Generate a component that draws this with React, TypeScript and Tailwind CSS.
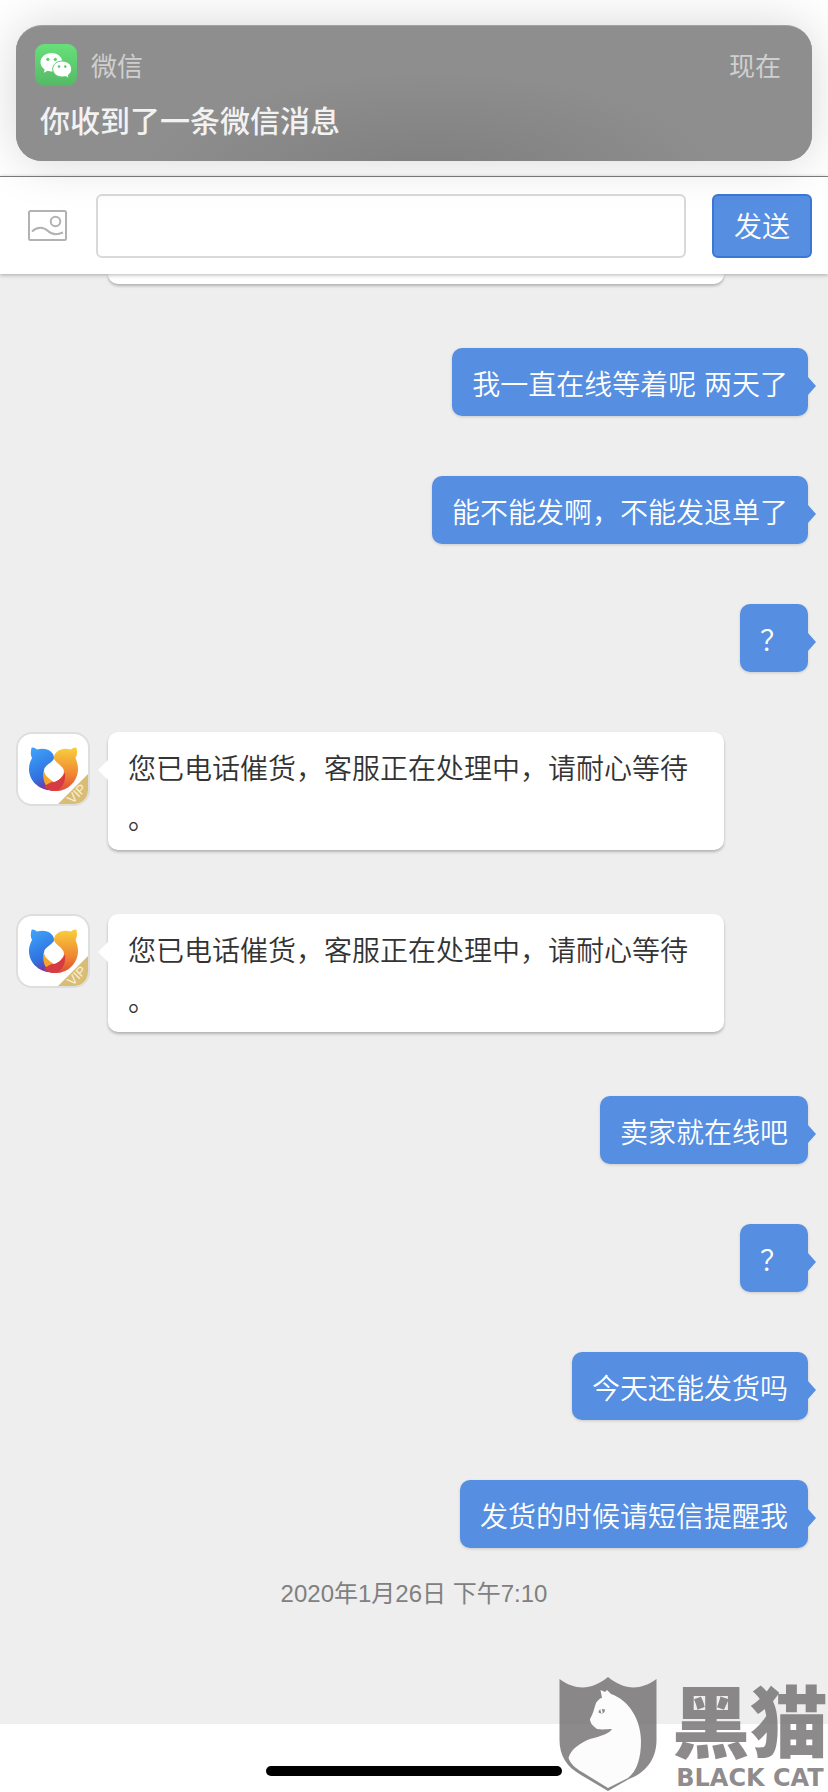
import clsx from "clsx"

type Message = {
  id: number
  from: "me" | "agent"
  text: string
}

const MESSAGES: Message[] = [
  { id: 1, from: "me", text: "我一直在线等着呢 两天了" },
  { id: 2, from: "me", text: "能不能发啊，不能发退单了" },
  { id: 3, from: "me", text: "？" },
  { id: 4, from: "agent", text: "您已电话催货，客服正在处理中，请耐心等待。" },
  { id: 5, from: "agent", text: "您已电话催货，客服正在处理中，请耐心等待。" },
  { id: 6, from: "me", text: "卖家就在线吧" },
  { id: 7, from: "me", text: "？" },
  { id: 8, from: "me", text: "今天还能发货吗" },
  { id: 9, from: "me", text: "发货的时候请短信提醒我" },
]

function WechatIcon() {
  return (
    <svg viewBox="0 0 42 42" className="size-[42px] shrink-0" aria-hidden="true">
      <defs>
        <linearGradient id="wechat" x1="0" y1="0" x2="0" y2="1">
          <stop offset="0" stopColor="#67e07a" />
          <stop offset="1" stopColor="#55b966" />
        </linearGradient>
      </defs>
      <rect width="42" height="42" rx="9.5" fill="url(#wechat)" />
      <path
        d="M16.5 9C10.400 9 5.500 13.100 5.500 18.300c0 3 1.600 5.500 4.100 7.200L8.900 28.700l3.700-1.900c1.300.4 2.600.6 3.900.6 6.100 0 11-4.100 11-9.100S22.600 9 16.500 9z"
        fill="#fff"
      />
      <path
        d="M27.200 17c-5.300 0-9.500 3.600-9.500 8s4.200 8 9.500 8c1.200 0 2.300-.2 3.400-.5l3.200 1.700-.7-2.900c2.200-1.500 3.600-3.700 3.600-6.300 0-4.400-4.200-8-9.500-8z"
        fill="#fff"
        stroke="#5ecb70"
        strokeWidth="1"
      />
      <g fill="#5ecb70">
        <circle cx="12.800" cy="15.300" r="1.600" />
        <circle cx="20.300" cy="15.300" r="1.600" />
        <circle cx="24" cy="22.600" r="1.300" />
        <circle cx="30.300" cy="22.600" r="1.300" />
      </g>
    </svg>
  )
}

function PictureIcon() {
  return (
    <svg viewBox="0 0 40 32" className="h-8 w-10" fill="none" stroke="#b2b2b2" strokeWidth="2" aria-hidden="true">
      <rect x="1" y="1" width="37" height="29" rx="1.500" />
      <circle cx="27.500" cy="11.500" r="4.800" />
      <path d="M4 21.500c5-5 11.500-5 16-.5 4 4 8.500 4.200 15 1.500" />
    </svg>
  )
}

function Avatar() {
  return (
    <div className="relative size-[74px] shrink-0 overflow-hidden rounded-2xl border-2 border-[#dedede] bg-white">
      <svg viewBox="0 0 70 70" className="size-full" role="img" aria-label="客服">
        <defs>
          <linearGradient id="bearBlue" x1="0" y1="0" x2="0.300" y2="1">
            <stop offset="0" stopColor="#3fa6fd" />
            <stop offset="0.750" stopColor="#2f72de" />
            <stop offset="1" stopColor="#6a3fb0" />
          </linearGradient>
          <linearGradient id="bearGold" x1="0" y1="0" x2="0" y2="1">
            <stop offset="0" stopColor="#f9cf3c" />
            <stop offset="0.650" stopColor="#ef8230" />
            <stop offset="1" stopColor="#dd4a3a" />
          </linearGradient>
        </defs>
        <path
          d="M13.500 14c1.500-1 3.500 0 5.500 1.500 4-1 7-1 10 0 4 1.500 7 4 7 8.500 0 4-10 7-10 12.500 0 7 4 13 8 20C20 56 11 46 11 35c0-4 1-7.500 3-11-1.500-3-1.500-6-.5-10z"
          fill="url(#bearBlue)"
        />
        <path
          d="M58.500 14c-1.500-1-3.500 0-5.500 1.500-4-1-7-1-10 0-4 1.500-7 4-7 8.500 0 4 10 8 10 13.500 0 5-7 9-14 19C48 60 60 48 60 35c0-4-1-7.500-2.500-11 1.500-3 2-6 1-10z"
          fill="url(#bearGold)"
        />
        <path d="M25.500 36c-1 6 0 12 3 16l9-3c-6-4-11-7-12-13z" fill="#f5a52c" />
        <path d="M26 53c3-3 6-5 10-5 6-2 9-5 11-10 1 9-2 15-7 18-5 1.500-10 .5-14-3z" fill="#d63b45" />
        <path d="M40 70 70 40v30z" fill="#d9bd74" />
        <text
          x="59"
          y="64"
          textAnchor="middle"
          transform="rotate(-45 59 60)"
          className="fill-[#f8f0da] font-['Liberation_Sans'] text-[13px]"
        >
          VIP
        </text>
      </svg>
    </div>
  )
}

function Bubble({ from, text }: Omit<Message, "id">) {
  const mine = from === "me"

  return (
    <div
      className={clsx(
        "relative rounded-[10px] px-5 pt-[13px] pb-[5px] leading-[50px] font-[350] [line-break:anywhere]",
        mine
          ? "bg-[#568ee1] text-white shadow-[0_1px_3px_rgba(0,0,0,0.15)]"
          : "flex-1 bg-white text-[#333] shadow-[0_2px_3px_rgba(0,0,0,0.25)]",
      )}
    >
      {text}
      <span
        className={clsx(
          "absolute border-y-transparent",
          mine
            ? "top-[29px] left-full border-y-[9px] border-l-8 border-l-[#568ee1]"
            : "top-7 right-full border-y-10 border-r-10 border-r-white",
        )}
      />
    </div>
  )
}

function MessageRow({ from, text }: Omit<Message, "id">) {
  if (from === "me") {
    return (
      <li className="flex justify-end pr-1 pl-24">
        <Bubble from={from} text={text} />
      </li>
    )
  }

  return (
    <li className="mb-1 flex items-start gap-[18px] pr-[88px]">
      <Avatar />
      <Bubble from={from} text={text} />
    </li>
  )
}

function Notification() {
  return (
    <section className="relative z-20 mx-4 mt-[25px] mb-[15px] flex h-[136px] flex-col rounded-[26px] border-t border-[#a2a2a2] bg-[#8e8e8e] bg-radial-[at_52%_115%] from-[#7e7e7e] to-[#8e8e8e] to-50% px-[19px] pt-[18px] shadow-[0_0_50px_rgba(0,0,0,0.16)]">
      <div className="flex items-center gap-3.5 pr-3 text-[26px] leading-[38px] text-[#cfcfcf]">
        <WechatIcon />
        <span className="pt-1">微信</span>
        <span className="ml-auto pt-1">现在</span>
      </div>
      <p className="mt-[15px] pl-[5px] text-[30px] leading-[42px] font-medium text-[#f2f2f2]">你收到了一条微信消息</p>
    </section>
  )
}

function Composer() {
  return (
    <form
      className="relative z-10 flex items-center border-t border-[#7c7c7c] bg-white px-4 pt-[17px] pb-4 shadow-[0_1px_4px_rgba(0,0,0,0.3)]"
      onSubmit={(e) => e.preventDefault()}
    >
      <button type="button" aria-label="发送图片" className="flex w-20 justify-start pl-3">
        <PictureIcon />
      </button>
      <input
        type="text"
        aria-label="消息内容"
        className="h-16 min-w-0 flex-1 rounded-md border-2 border-[#d9d9d9] bg-transparent px-4 outline-none"
      />
      <button
        type="submit"
        className="ml-[26px] h-16 w-[100px] rounded-md border-2 border-[#3c76d6] bg-[#568ee1] pt-1 text-[28px] font-[350] text-white"
      >
        发送
      </button>
    </form>
  )
}

function Watermark() {
  return (
    <div className="absolute right-0 bottom-0 flex items-end gap-[15px] text-[#716d6f]/80">
      <svg viewBox="0 0 98 116" className="h-[116px] w-[98px]" aria-hidden="true">
        <path
          fillRule="evenodd"
          fill="currentColor"
          d="M0.500 3C17 15 33 14 49 1C65 14 81 15 97.500 3V64C97.500 84 86 97 70 103L49 115L22 99C8 91 0.500 80 0.500 64Z"
        />
        <path
          d="M41.500 14L46 16L48 14L52 18C70 24 82 44 82 65C82 82 78 95 69 102L49 112L23 96C16 92 11 87 9.500 82C12 73 21 67 31 63C42 60 50 58 53 53C49 53 44 54 38 53C34 50 31 47 31 43C34 38 35 33 37 27C39 24 41 22 43 22Z"
          fill="#fcfcfc"
        />
        <path d="M39.500 36.500C39.500 33.500 42 32 46 33.500C46 37 43 39 39.500 36.500Z" fill="currentColor" />
        <path d="M42 33L43 37" stroke="#fff" strokeWidth="1.500" />
      </svg>
      <div className="flex flex-col items-center">
        <span className="text-[78px] leading-[78px] font-black">黑猫</span>
        <span className="font-['DejaVu_Sans'] text-2xl leading-7 font-bold whitespace-nowrap">BLACK CAT</span>
      </div>
    </div>
  )
}

export default function App() {
  return (
    <div className="relative flex min-h-screen flex-col overflow-hidden bg-white font-['Liberation_Sans','Noto_Sans_CJK_SC',sans-serif]">
      <Notification />
      <Composer />

      <main className="flex-1 bg-[#eee] px-4 text-[28px]">
        {/* tail end of an older message, scrolled under the composer */}
        <div className="mr-[88px] mb-16 ml-[92px] h-2.5 rounded-b-[10px] bg-white shadow-[0_2px_3px_rgba(0,0,0,0.25)]" />
        <ul className="flex flex-col gap-[60px]">
          {MESSAGES.map((message) => (
            <MessageRow key={message.id} from={message.from} text={message.text} />
          ))}
        </ul>
        <time className="mt-7 block text-center text-2xl leading-9 text-[#808080]" dateTime="2020-01-26T19:10">
          2020年1月26日 下午7:10
        </time>
      </main>

      <footer className="flex h-[68px] items-end justify-center pb-4">
        <div className="h-2.5 w-[296px] rounded-full bg-black" />
      </footer>
      <Watermark />
    </div>
  )
}
